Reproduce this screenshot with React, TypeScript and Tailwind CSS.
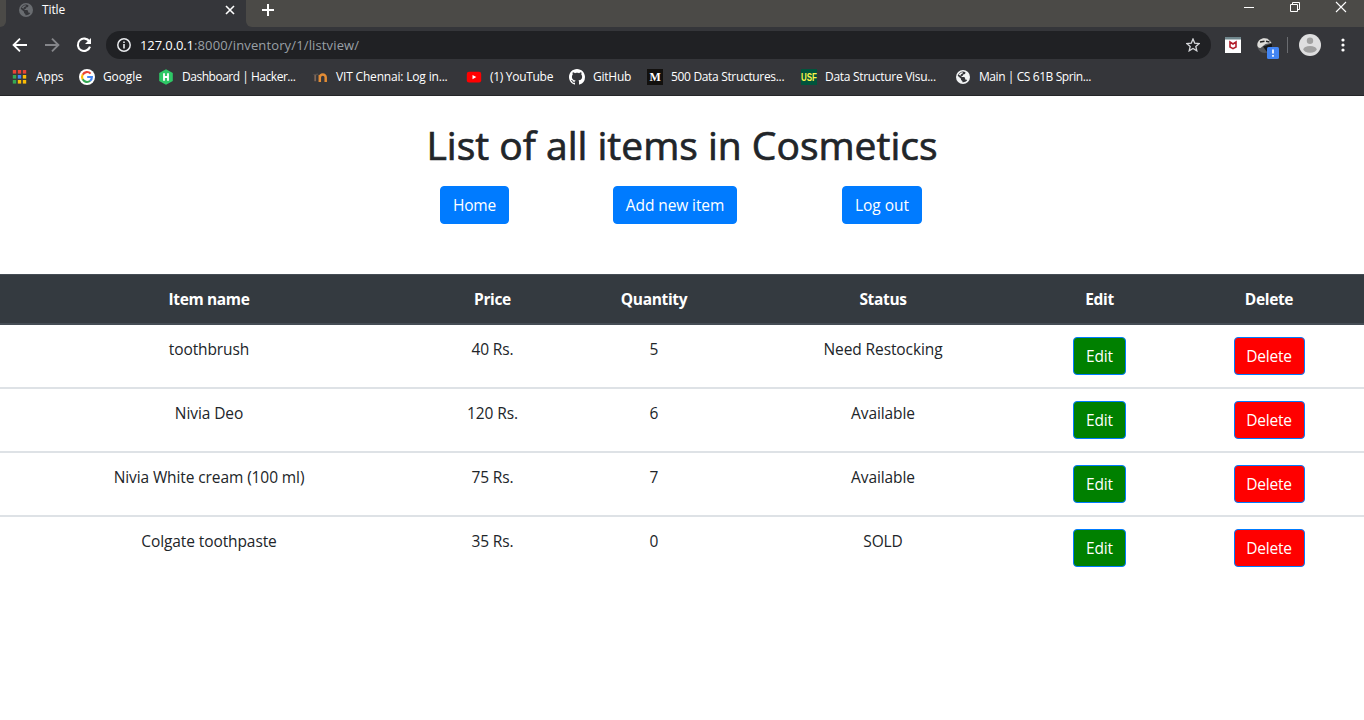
import type { ReactNode } from "react";

function Globe({ className }: { className: string }) {
  return (
    <svg viewBox="0 0 14 14" className={className}>
      <circle cx="7" cy="7" r="7" fill="currentColor" />
      <path
        fill="#35363a"
        d="M8.3 1.8 9.6 2.6 9 4 7.2 4.4 6.9 5.7 5.4 6.1 5.7 7H8.2L9.1 8.1V9.6H10.3L11.1 10.6A5.4 5.4 0 0 1 6.4 12.3V10.9L5 9.9V8.8L1.7 5.8A5.4 5.4 0 0 1 8.3 1.8Z"
      />
      <path fill="currentColor" d="M2.6 4.6 5 2.4 7 2.2 6.6 3.4 5 4.2 4.4 5.8Z" />
    </svg>
  );
}

function AppsIcon() {
  const colors = ["#ea4335", "#ea4335", "#ea4335", "#34a853", "#4285f4", "#fbbc05", "#34a853", "#fbbc05", "#fbbc05"];
  return (
    <svg viewBox="0 0 16 16" className="size-4">
      {colors.map((c, i) => (
        <rect key={i} x={0.8 + (i % 3) * 5} y={1 + Math.floor(i / 3) * 5} width="3.4" height="3.6" fill={c} />
      ))}
    </svg>
  );
}

function GoogleIcon() {
  return (
    <svg viewBox="0 0 16 16" className="size-4">
      <circle cx="8" cy="8" r="8" fill="#fff" />
      <g fill="none" strokeWidth="2.1">
        <path d="M11.6 4.6A4.9 4.9 0 0 0 3.7 5.7" stroke="#ea4335" />
        <path d="M3.7 5.6A4.9 4.9 0 0 0 3.7 10.4" stroke="#fbbc05" />
        <path d="M3.7 10.3A4.9 4.9 0 0 0 11.2 11.8" stroke="#34a853" />
        <path d="M11.1 11.8A4.9 4.9 0 0 0 12.9 8H8.2" stroke="#4285f4" />
      </g>
    </svg>
  );
}

function HackerIcon() {
  return (
    <svg viewBox="0 0 16 16" className="size-4">
      <path d="M8 .3 14.8 4.1V11.9L8 15.7 1.2 11.9V4.1Z" fill="#2ec866" />
      <path d="M6 4.2v7.6M10 4.2v7.6M6 8h4" stroke="#fff" strokeWidth="1.8" fill="none" />
    </svg>
  );
}

function MoodleIcon() {
  return (
    <svg viewBox="0 0 16 16" className="size-4">
      <path d="M.4 5.6 6 4.4 6.6 5.6 4 6.6Z" fill="#54504f" />
      <path d="M3.2 6v6.2" stroke="#7d6556" strokeWidth="1.8" />
      <path d="M7.8 13V8.4a2.9 2.9 0 0 1 5.9 0V13M7.8 6v3" stroke="#e38c35" strokeWidth="2.5" fill="none" />
    </svg>
  );
}

function YoutubeIcon() {
  return (
    <svg viewBox="0 0 16 16" className="size-4">
      <rect x=".8" y="2.8" width="14.4" height="10.6" rx="2.2" fill="#f00" />
      <path d="M6.5 5.9v4.4L10.3 8.1Z" fill="#fff" />
    </svg>
  );
}

function GithubIcon() {
  return (
    <svg viewBox="0 0 16 16" className="size-4" fill="#fff">
      <path d="M8 0C3.58 0 0 3.58 0 8c0 3.54 2.29 6.53 5.47 7.59.4.07.55-.17.55-.38 0-.19-.01-.82-.01-1.49-2.01.37-2.53-.49-2.69-.94-.09-.23-.48-.94-.82-1.13-.28-.15-.68-.52-.01-.53.63-.01 1.08.58 1.23.82.72 1.21 1.87.87 2.33.66.07-.52.28-.87.51-1.07-1.78-.2-3.64-.89-3.64-3.95 0-.87.31-1.59.82-2.15-.08-.2-.36-1.02.08-2.12 0 0 .67-.21 2.2.82.64-.18 1.32-.27 2-.27s1.36.09 2 .27c1.53-1.04 2.2-.82 2.2-.82.44 1.1.16 1.92.08 2.12.51.56.82 1.27.82 2.15 0 3.07-1.87 3.75-3.65 3.95.29.25.54.73.54 1.48 0 1.07-.01 1.93-.01 2.2 0 .21.15.46.55.38A8.01 8.01 0 0 0 16 8c0-4.42-3.58-8-8-8Z" />
    </svg>
  );
}

const bookmarks: { label: string; icon: ReactNode; width: string; text: string }[] = [
  { label: "Apps", icon: <AppsIcon />, width: "w-[67px]", text: "tracking-[-0.15px]" },
  { label: "Google", icon: <GoogleIcon />, width: "w-[79px]", text: "" },
  { label: "Dashboard | Hacker...", icon: <HackerIcon />, width: "w-[154px]", text: "tracking-[-0.48px]" },
  { label: "VIT Chennai: Log in...", icon: <MoodleIcon />, width: "w-[154px]", text: "tracking-[-0.18px]" },
  { label: "(1) YouTube", icon: <YoutubeIcon />, width: "w-[103px]", text: "tracking-[-0.3px]" },
  { label: "GitHub", icon: <GithubIcon />, width: "w-[78px]", text: "tracking-[-0.25px]" },
  {
    label: "500 Data Structures...",
    icon: <span className="flex size-4 items-center justify-center bg-[#12100e] font-['Liberation_Serif',serif] text-[12px] leading-none font-bold text-white">M</span>,
    width: "w-[154px]",
    text: "tracking-[-0.33px]",
  },
  {
    label: "Data Structure Visu...",
    icon: (
      <span className="flex size-4 items-center justify-center bg-[#00543c]">
        <span className="flex h-[10px] scale-x-[0.72] items-center font-['Liberation_Sans',sans-serif] text-[11px] leading-none font-bold text-[#fdf34a]">USF</span>
      </span>
    ),
    width: "w-[154px]",
    text: "tracking-[-0.3px]",
  },
  { label: "Main | CS 61B Sprin...", icon: <Globe className="size-[14px] text-[#f1f3f4]" />, width: "w-[154px]", text: "tracking-[-0.42px]" },
];

const items = [
  { name: "toothbrush", price: "40 Rs.", quantity: 5, status: "Need Restocking" },
  { name: "Nivia Deo", price: "120 Rs.", quantity: 6, status: "Available" },
  { name: "Nivia White cream (100 ml)", price: "75 Rs.", quantity: 7, status: "Available" },
  { name: "Colgate toothpaste", price: "35 Rs.", quantity: 0, status: "SOLD" },
];

const columns = "grid grid-cols-[418px_149px_174px_284px_149px_190px] text-center";

function Browser() {
  return (
    <header className="h-24 bg-[#35363a] font-['Open_Sans','Noto_Sans',sans-serif] text-white">
      <div className="flex h-[27px]">
        <div className="w-[6px] rounded-br-[6px] bg-[#4b4a47]" />
        <div className="flex h-[27px] w-[240px] items-center pb-[7px] pl-[13px]">
          <Globe className="size-[14px] text-[#696c70]" />
          <span className="ml-[9px] text-[12px] leading-4 tracking-[-0.1px]">Title</span>
          <svg viewBox="0 0 10 10" className="mr-[11px] ml-auto size-[10px]">
            <path d="m1 1 8 8M9 1 1 9" stroke="#fff" strokeWidth="1.6" />
          </svg>
        </div>
        <div className="flex-1 rounded-bl-[6px] bg-[#4b4a47] pt-[4px] pl-[16px]">
          <svg viewBox="0 0 12 12" className="size-[12px]">
            <path d="M6 0v12M0 6h12" stroke="#fff" strokeWidth="2" />
          </svg>
        </div>
        <div className="flex gap-[34px] bg-[#4b4a47] pt-[1px] pr-[17px]">
          <svg viewBox="0 0 12 12" className="size-3"><path d="M1 6.5h10" stroke="#fff" /></svg>
          <svg viewBox="0 0 12 12" className="size-3"><path d="M1.5 3.5h7v7h-7ZM3.5 3.5v-2h7v7h-2" stroke="#fff" fill="none" /></svg>
          <svg viewBox="0 0 12 12" className="size-3"><path d="m1 1 10 10M11 1 1 11" stroke="#fff" strokeWidth="1.1" /></svg>
        </div>
      </div>
      <div className="flex h-[36px] items-center">
        <svg viewBox="0 0 16 16" className="ml-[12px] size-4"><path d="M15 8H2M8 1.6 1.6 8 8 14.4" stroke="#fff" strokeWidth="1.9" fill="none" /></svg>
        <svg viewBox="0 0 16 16" className="ml-4 size-4"><path d="M1 8h13M8 1.6 14.4 8 8 14.4" stroke="#85868a" strokeWidth="1.9" fill="none" /></svg>
        <svg viewBox="0 0 16 16" className="ml-4 size-4"><path d="M13.4 4.6A6.2 6.2 0 1 0 14 9.6" stroke="#fff" strokeWidth="2.1" fill="none" /><path d="M15 1v6H9Z" fill="#fff" /></svg>
        <div className="ml-[14px] flex h-7 w-[1105px] items-center rounded-full bg-[#202124] px-[11px]">
          <svg viewBox="0 0 14 14" className="size-[14px]"><circle cx="7" cy="7" r="6.2" stroke="#e8eaed" strokeWidth="1.5" fill="none" /><path d="M7 6v4.5M7 3.4v1.6" stroke="#e8eaed" strokeWidth="1.6" /></svg>
          <span className="ml-[9px] text-[13px]">127.0.0.1</span>
          <span className="text-[13px] tracking-[0.14px] text-[#9aa0a6]">:8000/inventory/1/listview/</span>
          <svg viewBox="0 0 14 14" className="ml-auto size-[14px]"><path d="m7 1 1.7 4.1 4.5.4-3.4 2.9 1 4.4L7 10.5l-3.8 2.3 1-4.4L.8 5.5l4.5-.4Z" stroke="#d5d7da" strokeWidth="1.3" fill="none" /></svg>
        </div>
        <svg viewBox="0 0 16 16" className="ml-[14px] size-4"><path d="M0 0h16v16H0Z" fill="#fff" /><path d="M0 0h16v2.5H0Z" fill="#6f868c" /><path d="M5 5v5l3 1.6 3-1.6V5L8 7Z" stroke="#b3202c" strokeWidth="1.6" fill="none" /></svg>
        <svg viewBox="0 0 24 24" className="ml-4 size-6 overflow-visible">
          <circle cx="7.7" cy="12.5" r="7.5" fill="#55575a" />
          <path d="M.4 11C1 6.500 6 4 10.500 5.800l4 4-6 1.200-5 4C1 15 0 13 .4 11Z" fill="#deddda" />
          <path d="m3 9 4.500-.8M9 8.200l3.500.8" stroke="#222" strokeWidth="1.4" />
          <path d="m6 13.500 9-3v5l-5 3.500Z" fill="#16181a" />
          <rect x="10" y="14" width="12" height="12" rx="1.500" fill="#4285f4" />
          <path d="M16 16.500v4M16 22v1.800" stroke="#fff" strokeWidth="1.700" />
        </svg>
        <div className="ml-[6px] h-4 w-px bg-[#6a6c70]" />
        <svg viewBox="0 0 22 22" className="ml-[11px] size-[22px]"><circle cx="11" cy="11" r="11" fill="#dededf" /><circle cx="11" cy="6.8" r="3.2" fill="#a0a0a0" /><ellipse cx="11" cy="15.3" rx="6.6" ry="3.4" fill="#a0a0a0" /></svg>
        <svg viewBox="0 0 4 14" className="ml-[20px] h-[14px] w-1" fill="#fff"><circle cx="2" cy="2" r="1.6" /><circle cx="2" cy="7" r="1.6" /><circle cx="2" cy="12" r="1.6" /></svg>
      </div>
      <nav className="flex h-[33px] border-b border-[#242528] pb-[4px] pl-[12px]">
        {bookmarks.map((b) => (
          <div key={b.label} className={`flex shrink-0 items-center gap-2 ${b.width}`}>
            <span className="flex size-4 items-center justify-center">{b.icon}</span>
            <span className={`text-[12px] leading-4 whitespace-nowrap ${b.text}`}>{b.label}</span>
          </div>
        ))}
      </nav>
    </header>
  );
}

function Button({ children, className }: { children: string; className: string }) {
  return (
    <button className={`h-[38px] rounded-[4px] border border-[#007bff] whitespace-nowrap text-white ${className}`}>
      {children}
    </button>
  );
}

export default function App() {
  return (
    <div className="h-[720px] overflow-hidden bg-white font-['Open_Sans','Noto_Sans',sans-serif] text-[15.5px] leading-6 tracking-[-0.1px] text-[#212529]">
      <Browser />
      <main>
        <h1 className="mt-[25px] text-center text-[39px] leading-[48px] font-medium tracking-normal [-webkit-text-stroke:0.7px_#212529]">
          List of all items in Cosmetics
        </h1>
        <div className="mt-[17px] flex pl-[440px]">
          <Button className="w-[69px] bg-[#007bff] tracking-[-0.2px]">Home</Button>
          <Button className="ml-[104px] w-[124px] bg-[#007bff]">Add new item</Button>
          <Button className="ml-[105px] w-[80px] bg-[#007bff] tracking-normal">Log out</Button>
        </div>
        <section className="mt-[50px]">
          <div className={`${columns} h-[51px] border-t border-b-2 border-[#454d55] bg-[#343a40] pt-3 font-bold tracking-[-0.35px] text-white`}>
            {["Item name", "Price", "Quantity", "Status", "Edit", "Delete"].map((h) => (
              <div key={h}>{h}</div>
            ))}
          </div>
          {items.map((item) => (
            <div key={item.name} className={`${columns} border-b-2 border-[#dee2e6] py-3 last:border-b-0`}>
              <div>{item.name}</div>
              <div>{item.price}</div>
              <div>{item.quantity}</div>
              <div>{item.status}</div>
              <div><Button className="w-[53px] bg-[#008000] tracking-[-0.15px]">Edit</Button></div>
              <div><Button className="w-[71px] bg-[#ff0000] tracking-[-0.25px]">Delete</Button></div>
            </div>
          ))}
        </section>
      </main>
    </div>
  );
}
